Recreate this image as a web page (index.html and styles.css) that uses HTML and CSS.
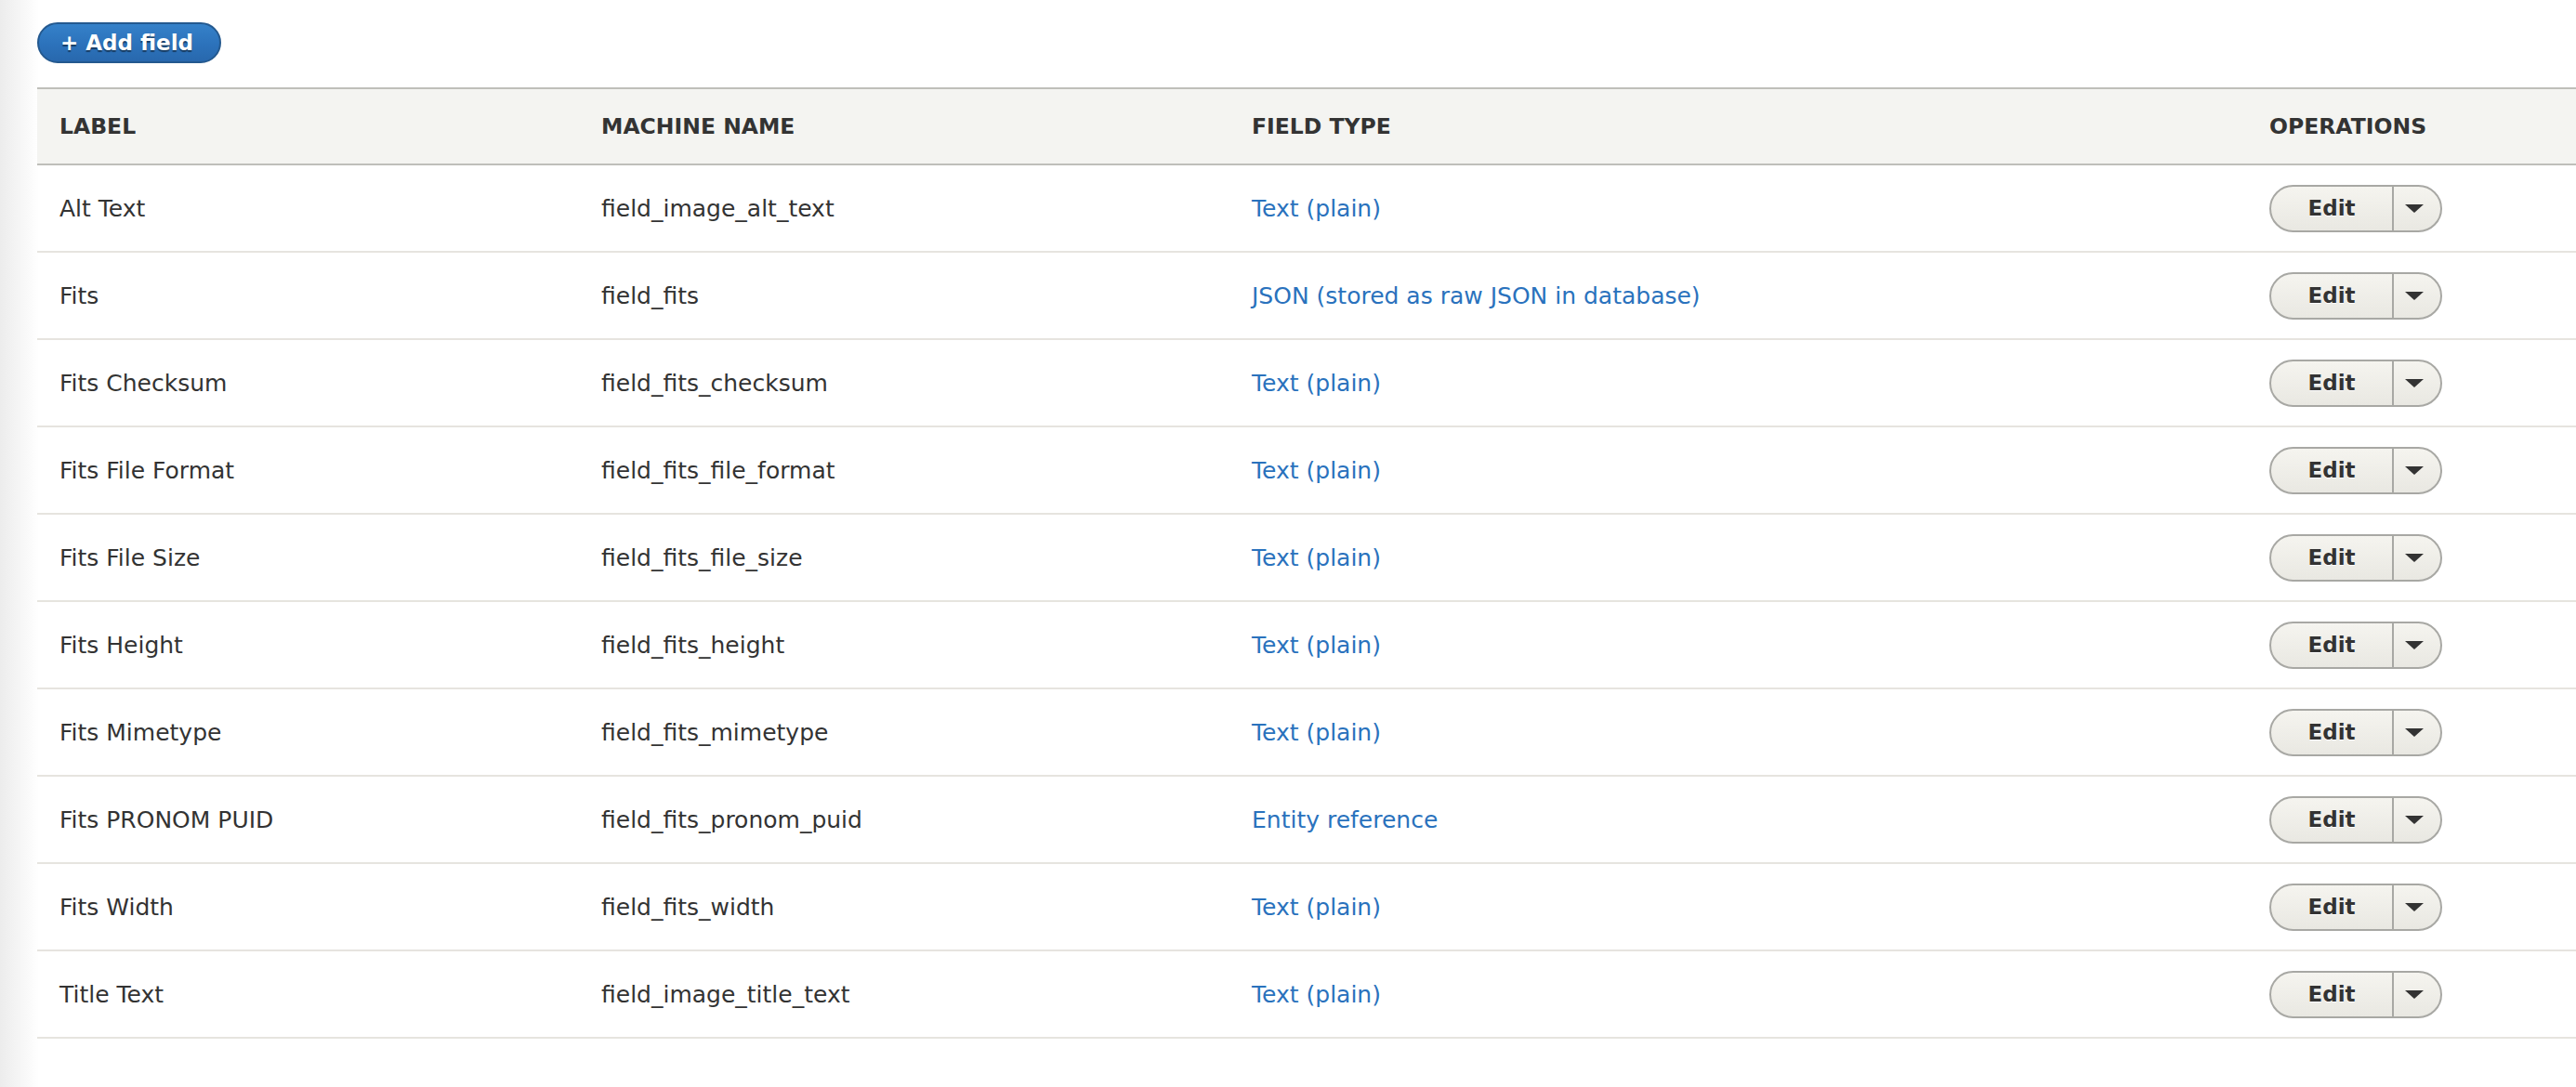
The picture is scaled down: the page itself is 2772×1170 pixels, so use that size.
FILE: index.html
```html
<!DOCTYPE html>
<html lang="en">
<head>
<meta charset="utf-8">
<title>Manage fields</title>
<link rel="stylesheet" href="styles.css">
</head>
<body>
<div class="page">
  <div class="actions">
    <a class="button button-primary" href="#">+ Add field</a>
  </div>
  <table class="fields">
    <colgroup>
      <col class="c-label">
      <col class="c-machine">
      <col class="c-type">
      <col class="c-ops">
    </colgroup>
    <thead>
      <tr><th>Label</th><th>Machine name</th><th>Field type</th><th>Operations</th></tr>
    </thead>
    <tbody>
      <tr><td>Alt Text</td><td>field_image_alt_text</td><td><a href="#">Text (plain)</a></td><td><div class="dropbutton"><span class="db-main">Edit</span><span class="db-toggle"><span class="tri"></span></span></div></td></tr>
      <tr><td>Fits</td><td>field_fits</td><td><a href="#">JSON (stored as raw JSON in database)</a></td><td><div class="dropbutton"><span class="db-main">Edit</span><span class="db-toggle"><span class="tri"></span></span></div></td></tr>
      <tr><td>Fits Checksum</td><td>field_fits_checksum</td><td><a href="#">Text (plain)</a></td><td><div class="dropbutton"><span class="db-main">Edit</span><span class="db-toggle"><span class="tri"></span></span></div></td></tr>
      <tr><td>Fits File Format</td><td>field_fits_file_format</td><td><a href="#">Text (plain)</a></td><td><div class="dropbutton"><span class="db-main">Edit</span><span class="db-toggle"><span class="tri"></span></span></div></td></tr>
      <tr><td>Fits File Size</td><td>field_fits_file_size</td><td><a href="#">Text (plain)</a></td><td><div class="dropbutton"><span class="db-main">Edit</span><span class="db-toggle"><span class="tri"></span></span></div></td></tr>
      <tr><td>Fits Height</td><td>field_fits_height</td><td><a href="#">Text (plain)</a></td><td><div class="dropbutton"><span class="db-main">Edit</span><span class="db-toggle"><span class="tri"></span></span></div></td></tr>
      <tr><td>Fits Mimetype</td><td>field_fits_mimetype</td><td><a href="#">Text (plain)</a></td><td><div class="dropbutton"><span class="db-main">Edit</span><span class="db-toggle"><span class="tri"></span></span></div></td></tr>
      <tr><td>Fits PRONOM PUID</td><td>field_fits_pronom_puid</td><td><a href="#">Entity reference</a></td><td><div class="dropbutton"><span class="db-main">Edit</span><span class="db-toggle"><span class="tri"></span></span></div></td></tr>
      <tr><td>Fits Width</td><td>field_fits_width</td><td><a href="#">Text (plain)</a></td><td><div class="dropbutton"><span class="db-main">Edit</span><span class="db-toggle"><span class="tri"></span></span></div></td></tr>
      <tr><td>Title Text</td><td>field_image_title_text</td><td><a href="#">Text (plain)</a></td><td><div class="dropbutton"><span class="db-main">Edit</span><span class="db-toggle"><span class="tri"></span></span></div></td></tr>
    </tbody>
  </table>
</div>
</body>
</html>
```

FILE: styles.css
```css
html, body {
  margin: 0;
  padding: 0;
}
body {
  min-height: 1170px;
  background: linear-gradient(to right, #ececec 0, #f6f6f6 22px, #ffffff 42px);
  font-family: "Lucida Grande", "DejaVu Sans", sans-serif;
  color: #333333;
}
.page {
  padding: 24px 0 0 40px;
}
.actions {
  display: flex;
}
.button {
  display: inline-flex;
  align-items: center;
  justify-content: center;
  box-sizing: border-box;
  height: 44px;
  padding: 0 28px 0 23px;
  border-radius: 22px;
  text-decoration: none;
  font-weight: bold;
  font-size: 23px;
}
.button-primary {
  color: #ffffff;
  background: linear-gradient(to bottom, #3581c9 0%, #2c72bb 55%, #2868ad 100%);
  border: 2px solid #24598f;
  text-shadow: 0 2px 1px rgba(0, 0, 0, 0.45);
}
.fields {
  margin-top: 26px;
  width: 2732px;
  border-collapse: collapse;
  table-layout: fixed;
  font-size: 25px;
}
.c-label { width: 583px; }
.c-machine { width: 700px; }
.c-type { width: 1095px; }
.c-ops { width: 354px; }
.fields thead tr {
  background: #f4f4f1;
  border-top: 2px solid #bfbfba;
  border-bottom: 2px solid #bfbfba;
}
.fields th {
  height: 80px;
  padding: 0 24px;
  text-align: left;
  text-transform: uppercase;
  font-weight: bold;
  font-size: 23.5px;
  color: #333333;
  vertical-align: middle;
}
.fields tbody tr {
  border-bottom: 2px solid #e6e4df;
}
.fields td {
  height: 92px;
  padding: 0 24px;
  vertical-align: middle;
  white-space: nowrap;
}
.fields a {
  color: #2a72bd;
  text-decoration: none;
}
.dropbutton {
  display: inline-flex;
  box-sizing: border-box;
  height: 51px;
  border: 2px solid #a8a8a4;
  border-radius: 26px;
  background: linear-gradient(to bottom, #f5f4ef 0%, #e9e8e2 100%);
  overflow: hidden;
}
.db-main {
  display: flex;
  align-items: center;
  justify-content: center;
  width: 130px;
  font-weight: bold;
  font-size: 23px;
  color: #333333;
  text-shadow: 0 1px 0 #ffffff;
  border-right: 2px solid #a8a8a4;
}
.db-toggle {
  display: flex;
  align-items: center;
  justify-content: center;
  width: 50px;
  padding-right: 6px;
  box-sizing: border-box;
}
.tri {
  width: 0;
  height: 0;
  border-left: 10px solid transparent;
  border-right: 10px solid transparent;
  border-top: 9px solid #333333;
}
```
